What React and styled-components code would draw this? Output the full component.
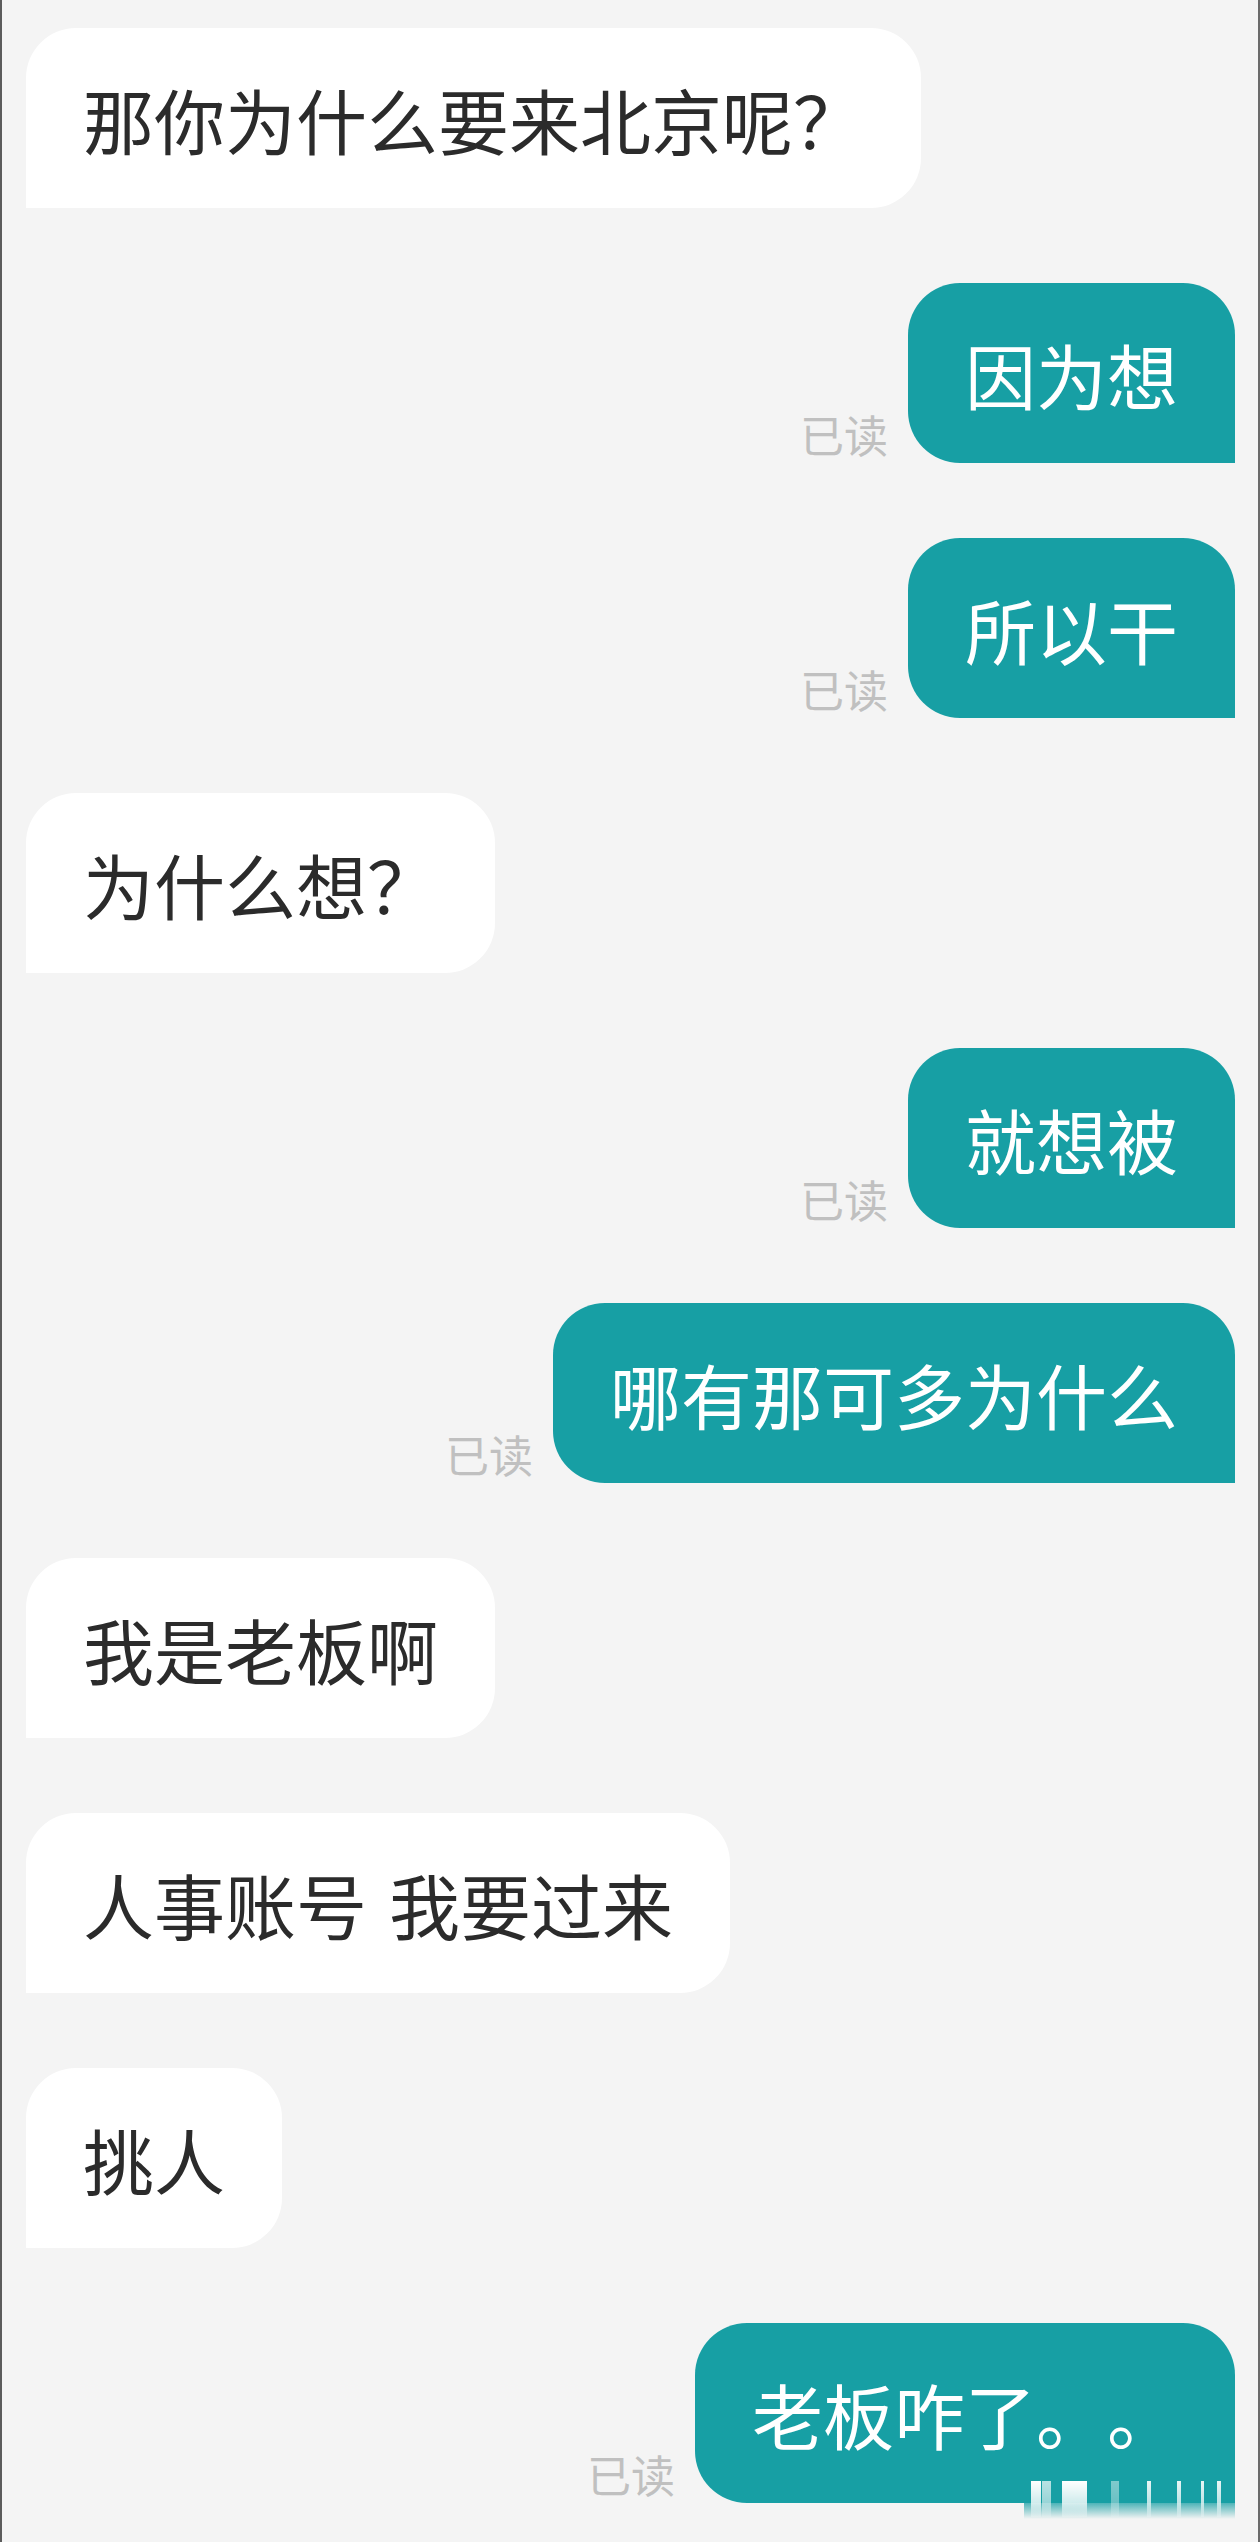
import React from "react";
import styled, { createGlobalStyle, css } from "styled-components";

const TEAL = "#179fa4";
const BG = "#f4f4f4";

const GlobalStyle = createGlobalStyle`
  html, body {
    margin: 0;
    padding: 0;
    background: ${BG};
  }
  * { box-sizing: border-box; }
`;

const Page = styled.div`
  width: 1260px;
  min-height: 2542px;
  background: ${BG};
  border-left: 2px solid #5c5c5c;
  border-right: 2px solid #6a6a6a;
  padding: 28px 23px 0 24px;
  font-family: "Noto Sans CJK SC", "Noto Sans", sans-serif;
`;

const Thread = styled.div`
  display: flex;
  flex-direction: column;
  gap: 75px;
`;

const Row = styled.div`
  display: flex;
  align-items: flex-end;
  justify-content: ${(p) => (p.$mine ? "flex-end" : "flex-start")};
  gap: 20px;
`;

const Bubble = styled.div`
  position: relative;
  height: 180px;
  padding: 0 57px;
  display: flex;
  align-items: center;
  font-size: 71px;
  line-height: 1;
  white-space: nowrap;
  word-spacing: 6px;
  text-spacing-trim: space-all;
  ${(p) =>
    p.$mine
      ? css`
          background: ${TEAL};
          color: #ffffff;
          border-radius: 52px 52px 0 52px;
        `
      : css`
          background: #ffffff;
          color: #2b2b2b;
          border-radius: 50px 50px 50px 0;
        `}
`;

const ReadMark = styled.span`
  font-size: 44px;
  line-height: 1;
  color: #c0c0c0;
  margin-bottom: 7px;
`;

const Watermark = styled.svg`
  position: absolute;
  right: 0;
  bottom: -16px;
  width: 211px;
  height: 40px;
  display: block;
`;

function Mark() {
  const bars = [
    [7, 10, 1],
    [18, 9, 0.7],
    [38, 25, 1],
    [87, 8, 0.45],
    [123, 4, 0.9],
    [153, 4, 0.9],
    [177, 3, 0.9],
    [193, 4, 0.9],
  ];
  return (
    <Watermark viewBox="0 0 211 40">
      <defs>
        <linearGradient id="wmBase" x1="0" y1="0" x2="0" y2="1">
          <stop offset="0" stopColor={TEAL} stopOpacity="1" />
          <stop offset="0.55" stopColor={TEAL} stopOpacity="0.85" />
          <stop offset="1" stopColor={TEAL} stopOpacity="0" />
        </linearGradient>
        <linearGradient id="wmBar" x1="0" y1="0" x2="0" y2="1">
          <stop offset="0" stopColor="#ffffff" stopOpacity="1" />
          <stop offset="0.6" stopColor="#ffffff" stopOpacity="0.8" />
          <stop offset="1" stopColor="#ffffff" stopOpacity="0.2" />
        </linearGradient>
      </defs>
      <rect x="0" y="0" width="211" height="40" fill="url(#wmBase)" />
      {bars.map(([x, w, o], i) => (
        <rect key={i} x={x} y="2" width={w} height="36" fill="url(#wmBar)" opacity={o} />
      ))}
    </Watermark>
  );
}

const messages = [
  { mine: false, text: "那你为什么要来北京呢？" },
  { mine: true, text: "因为想" },
  { mine: true, text: "所以干" },
  { mine: false, text: "为什么想？" },
  { mine: true, text: "就想被" },
  { mine: true, text: "哪有那可多为什么" },
  { mine: false, text: "我是老板啊" },
  { mine: false, text: "人事账号 我要过来" },
  { mine: false, text: "挑人" },
  { mine: true, text: "老板咋了。。", mark: true },
];

export default function App() {
  return (
    <>
      <GlobalStyle />
      <Page>
        <Thread>
          {messages.map((m, i) => (
            <Row key={i} $mine={m.mine}>
              {m.mine && <ReadMark>已读</ReadMark>}
              <Bubble $mine={m.mine}>
                {m.text}
                {m.mark && <Mark />}
              </Bubble>
            </Row>
          ))}
        </Thread>
      </Page>
    </>
  );
}
